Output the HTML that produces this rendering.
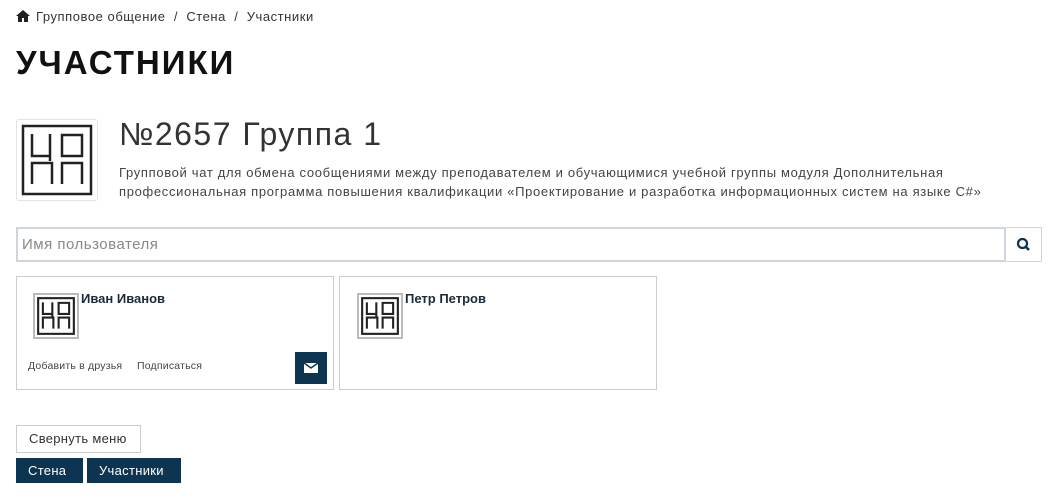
<!DOCTYPE html>
<html><head><meta charset="utf-8"><style>
*{box-sizing:border-box;margin:0;padding:0}
body{width:1060px;height:498px;background:#fff;font-family:"Liberation Sans",sans-serif;color:#333;position:relative;overflow:hidden}
.a{position:absolute;white-space:nowrap}
.bc{top:9px;left:16px;font-size:13px;color:#333;letter-spacing:0.55px}
.h1{top:44px;left:16px;font-size:33px;font-weight:bold;color:#111;letter-spacing:2px}
.logo{left:16px;top:119px;width:82px;height:82px;border:1px solid #e3e3e3;border-radius:3px}
.title{left:119px;top:116px;font-size:32px;color:#333;letter-spacing:1.5px}
.desc{left:119px;top:163px;font-size:13px;line-height:19px;color:#444;letter-spacing:0.67px}
.inp{left:16px;top:227px;width:990px;height:35px;border:2px solid #cfd5dc;font-size:15px;color:#888;padding:7px 4px;letter-spacing:0.5px}
.sbtn{left:1005px;top:227px;width:37px;height:35px;border:1px solid #cfd5dc}
.card{top:276px;width:318px;height:114px;border:1px solid #ccc}
.av{width:46px;height:46px;border:2px solid #bbb;background:#fff}
.nm{font-size:13px;font-weight:bold;color:#1b2a38}
.lk{font-size:10.5px;color:#444;letter-spacing:0.2px}
.mail{left:295px;top:352px;width:32px;height:32px;background:#0d3450}
.btn{font-size:13px;height:28px;line-height:26px;padding:0 12px;letter-spacing:0.3px}
.dk{background:#0d3450;color:#fff;height:25px;line-height:25px;top:458px}
</style></head><body>
<div class="a bc"><svg width="14" height="12" viewBox="0 0 14 12" style="vertical-align:-1px;margin-right:6px"><path d="M7 0L0 6h2v6h4V8h2v4h4V6h2z" fill="#222"/></svg>Групповое общение&nbsp; / &nbsp;Стена&nbsp; / &nbsp;Участники</div>
<div class="a h1">УЧАСТНИКИ</div>
<div class="a logo"><svg width="80" height="80" viewBox="0 0 80 80"><rect x="6" y="6" width="68" height="68" fill="none" stroke="#222" stroke-width="2.5"/><g fill="none" stroke="#222" stroke-width="2.5"><path d="M15 14v22h18v-22M33 36v5"/><path d="M45 15h20v21h-20z"/><path d="M15 64v-21h20v21"/><path d="M45 64v-21h20v21"/></g></svg></div>
<div class="a title">№2657 Группа 1</div>
<div class="a desc">Групповой чат для обмена сообщениями между преподавателем и обучающимися учебной группы модуля Дополнительная<br>профессиональная программа повышения квалификации «Проектирование и разработка информационных систем на языке C#»</div>
<div class="a inp">Имя пользователя</div>
<div class="a sbtn"><svg width="35" height="33" viewBox="0 0 35 33"><circle cx="16.5" cy="15.5" r="4.5" fill="none" stroke="#0d3450" stroke-width="2.2"/><path d="M19.5 18.5l3.5 3.5" stroke="#0d3450" stroke-width="2.6"/></svg></div>

<div class="a card" style="left:16px"></div>
<div class="a card" style="left:339px"></div>
<div class="a av" style="left:33px;top:293px"><svg width="42" height="42" viewBox="0 0 80 80"><rect x="6" y="6" width="68" height="68" fill="none" stroke="#222" stroke-width="4"/><g fill="none" stroke="#222" stroke-width="4"><path d="M15 14v22h18v-22M33 36v5"/><path d="M45 15h20v21h-20z"/><path d="M15 64v-21h20v21"/><path d="M45 64v-21h20v21"/></g></svg></div>
<div class="a av" style="left:357px;top:293px"><svg width="42" height="42" viewBox="0 0 80 80"><rect x="6" y="6" width="68" height="68" fill="none" stroke="#222" stroke-width="4"/><g fill="none" stroke="#222" stroke-width="4"><path d="M15 14v22h18v-22M33 36v5"/><path d="M45 15h20v21h-20z"/><path d="M15 64v-21h20v21"/><path d="M45 64v-21h20v21"/></g></svg></div>
<div class="a nm" style="left:81px;top:291px">Иван Иванов</div>
<div class="a nm" style="left:405px;top:291px">Петр Петров</div>
<div class="a lk" style="left:28px;top:360px">Добавить в друзья</div>
<div class="a lk" style="left:137px;top:360px">Подписаться</div>
<div class="a mail"><svg width="32" height="32" viewBox="0 0 32 32"><rect x="9" y="11" width="14" height="10" fill="#fff"/><path d="M9 11l7 5 7-5" fill="none" stroke="#0d3450" stroke-width="1.5"/></svg></div>

<div class="a btn" style="left:16px;top:425px;width:125px;border:1px solid #ccc;color:#333">Свернуть меню</div>
<div class="a btn dk" style="left:16px;width:67px">Стена</div>
<div class="a btn dk" style="left:87px;width:94px">Участники</div>
</body></html>
